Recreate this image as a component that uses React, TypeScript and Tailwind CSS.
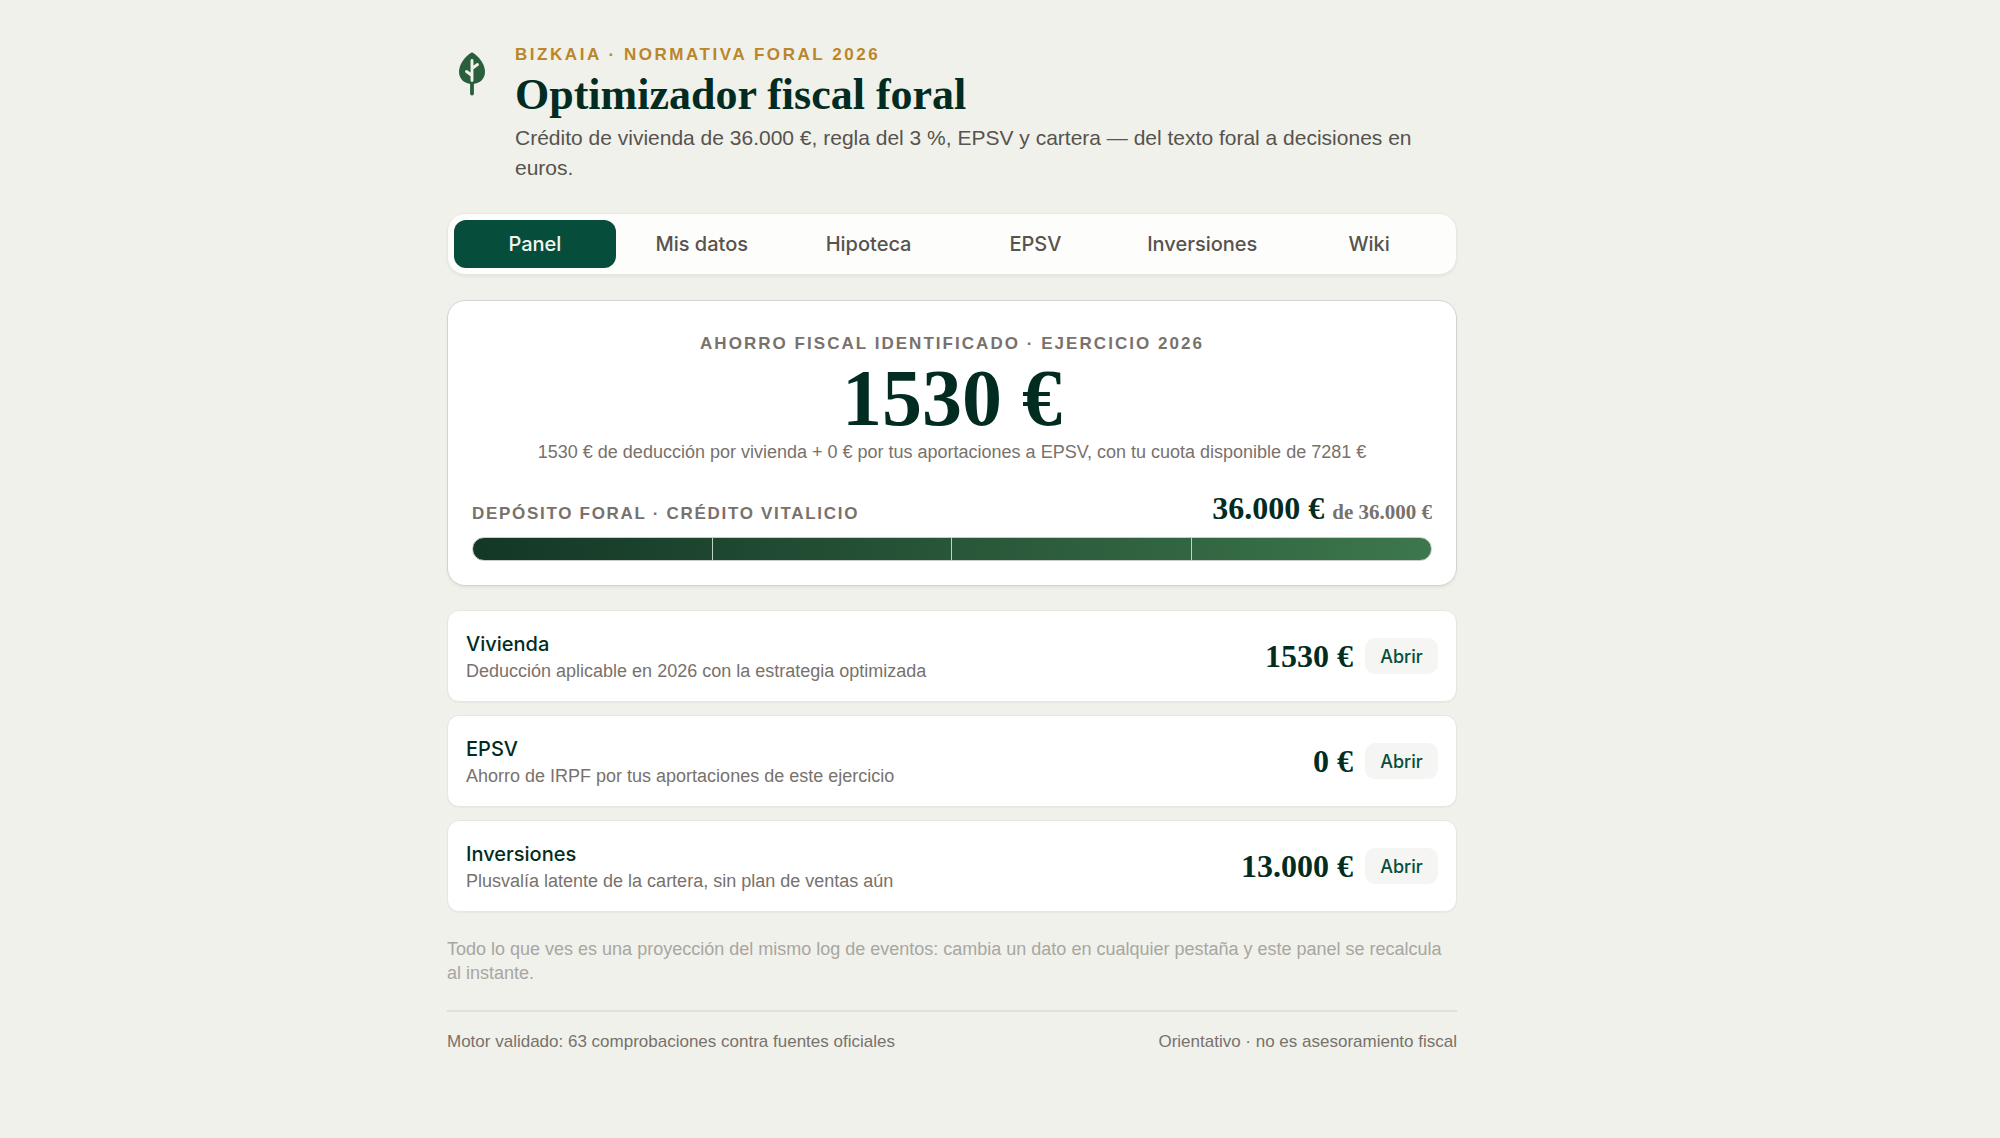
import React, { useState } from "react";

const TABS = ["Panel", "Mis datos", "Hipoteca", "EPSV", "Inversiones", "Wiki"];

interface Resumen {
  titulo: string;
  detalle: string;
  importe: string;
}

const RESUMENES: Resumen[] = [
  { titulo: "Vivienda", detalle: "Deducción aplicable en 2026 con la estrategia optimizada", importe: "1530 €" },
  { titulo: "EPSV", detalle: "Ahorro de IRPF por tus aportaciones de este ejercicio", importe: "0 €" },
  { titulo: "Inversiones", detalle: "Plusvalía latente de la cartera, sin plan de ventas aún", importe: "13.000 €" },
];

const LeafLogo = () => (
  <svg viewBox="0 0 50 50" className="mt-1.5 size-[50px] shrink-0" fill="none" aria-hidden="true">
    <path d="M25 3.5C27 3.5 38 12.500 38 23C38 30 32.500 35 25 35C17.500 35 12 30 12 23C12 12.500 23 3.500 25 3.500Z" fill="#2a5f3e" />
    <path d="M25 34V44.500" stroke="#2a5f3e" strokeWidth="3.800" strokeLinecap="round" />
    <path d="M25 11.500V31.500M25 19.500L30.500 15.500M25 26.500L19.500 22.500" stroke="#f0f1eb" strokeWidth="2.900" strokeLinecap="round" />
  </svg>
);

const Header = () => (
  <header className="flex gap-[18px]">
    <LeafLogo />
    <div className="flex-1">
      <p className="text-[17px] leading-[24px] font-bold uppercase tracking-[0.15em] text-[#bb862a]">
        Bizkaia · Normativa foral 2026
      </p>
      <h1 className="font-['Liberation_Serif',serif] text-[44px] leading-[56px] font-bold text-[#022c22]">
        Optimizador fiscal foral
      </h1>
      <p className="text-[21px] leading-[30px] text-[#57534e]">
        Crédito de vivienda de 36.000&nbsp;€, regla del 3&nbsp;%, EPSV y cartera — del texto foral a decisiones en euros.
      </p>
    </div>
  </header>
);

const ResumenRow: React.FC<{ resumen: Resumen }> = ({ resumen }) => (
  <li className="flex items-center gap-3 rounded-xl border border-[#e5e6e2] bg-white px-[18px] py-[18px] shadow-[0_1px_1px_rgba(2,44,34,0.04)]">
    <div className="flex-1">
      <h2 className="font-[Inter,sans-serif] text-[20px] leading-[30px] font-medium text-[#022c22]">{resumen.titulo}</h2>
      <p className="text-[18px] leading-[24px] text-[#78716c]">{resumen.detalle}</p>
    </div>
    <span className="font-['Liberation_Serif',serif] text-[32px] leading-[36px] font-bold text-[#022c22]">{resumen.importe}</span>
    <button type="button" className="h-9 w-[73px] rounded-[10px] bg-[#f5f5f4] font-[Inter,sans-serif] text-[18px] font-medium text-[#064e3b]">
      Abrir
    </button>
  </li>
);

export default function App() {
  const [tab, setTab] = useState("Panel");

  return (
    <div className="min-h-screen bg-[#f0f1eb] pr-24 font-['Liberation_Sans',sans-serif]">
      <div className="mx-auto max-w-[1010px] pt-[43px] pb-20">
        <Header />

        <nav className="mt-[30px] grid grid-cols-6 gap-[5px] rounded-[18px] border border-[#e7e8e4] bg-[#fdfdfc] p-[6px] shadow-[0_2px_3px_rgba(2,44,34,0.05)]">
          {TABS.map((name) => (
            <button
              key={name}
              type="button"
              onClick={() => setTab(name)}
              className={
                tab === name
                  ? "h-12 rounded-xl bg-[#064e3b] font-[Inter,sans-serif] text-[20px] font-medium text-[#f5f5f0]"
                  : "h-12 rounded-xl font-[Inter,sans-serif] text-[20px] font-medium text-[#57534e]"
              }
            >
              {name}
            </button>
          ))}
        </nav>

        {/* Ahorro total y depósito */}
        <section className="mt-[25px] rounded-[18px] border border-[#d0d5d1] bg-white px-6 pt-[31px] pb-6 shadow-[0_2px_3px_rgba(2,44,34,0.06)]">
          <div className="text-center">
            <p className="text-[17px] leading-[24px] font-bold uppercase tracking-[0.12em] text-[#78716c]">
              Ahorro fiscal identificado · Ejercicio 2026
            </p>
            <p className="font-['Liberation_Serif',serif] text-[80px] leading-[84px] font-bold text-[#022c22]">1530 €</p>
            <p className="text-[18px] leading-[24px] text-[#78716c]">
              1530 € de deducción por vivienda + 0 € por tus aportaciones a EPSV, con tu cuota disponible de 7281 €
            </p>
          </div>

          <div className="mt-[26px] flex items-baseline justify-between">
            <span className="text-[17px] leading-[24px] font-bold uppercase tracking-[0.1em] text-[#78716c]">
              Depósito foral · Crédito vitalicio
            </span>
            <span className="font-['Liberation_Serif',serif] text-[32px] leading-[36px] font-bold text-[#022c22]">
              36.000 € <span className="text-[21px] text-[#78716c]">de 36.000 €</span>
            </span>
          </div>
          <div className="mt-[7px] h-6 overflow-hidden rounded-full border border-[#c9cec9] bg-linear-to-r from-[#143726] to-[#3d774c]">
            <div className="grid h-full grid-cols-4 divide-x divide-[#c5d0c7]">
              <span />
              <span />
              <span />
              <span />
            </div>
          </div>
        </section>

        <ul className="mt-6 flex flex-col gap-[13px]">
          {RESUMENES.map((resumen) => (
            <ResumenRow key={resumen.titulo} resumen={resumen} />
          ))}
        </ul>

        <p className="mt-[25px] text-[18px] leading-[24px] text-[#a8a6a1]">
          Todo lo que ves es una proyección del mismo log de eventos: cambia un dato en cualquier pestaña y este panel se recalcula al instante.
        </p>

        <footer className="mt-[25px] flex justify-between border-t-2 border-[#dfe1da] pt-[18px] text-[17px] leading-[24px] text-[#78716c]">
          <span>Motor validado: 63 comprobaciones contra fuentes oficiales</span>
          <span>Orientativo · no es asesoramiento fiscal</span>
        </footer>
      </div>
    </div>
  );
}
